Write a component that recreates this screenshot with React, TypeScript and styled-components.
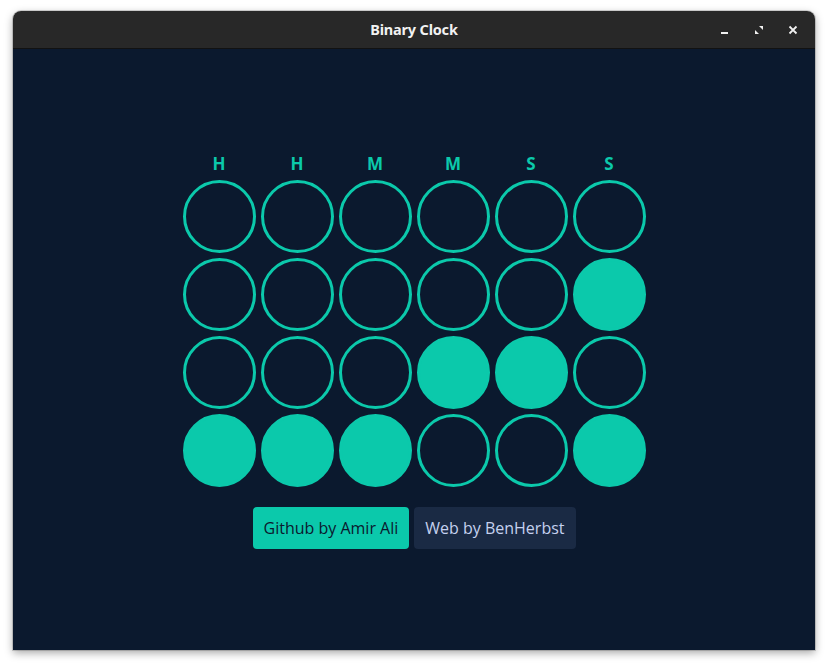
import React from "react";
import styled, { createGlobalStyle } from "styled-components";

const Global = createGlobalStyle`
  html, body { margin: 0; padding: 0; background: #ffffff; }
  body { font-family: "Open Sans", "Noto Sans", sans-serif; }
`;

const Page = styled.div`
  width: 828px;
  height: 666px;
  padding: 11px 13px 0 13px;
  box-sizing: border-box;
`;

const Window = styled.div`
  width: 802px;
  height: 639px;
  display: flex;
  flex-direction: column;
  border-radius: 8px 8px 0 0;
  overflow: hidden;
  box-shadow: 0 3px 8px rgba(0, 0, 0, 0.35), 0 0 0 1px rgba(0, 0, 0, 0.15);
`;

const TitleBar = styled.div`
  height: 37px;
  flex: none;
  background: #282828;
  border-bottom: 1px solid #121212;
  display: grid;
  grid-template-columns: 1fr auto 1fr;
  align-items: center;
`;

const Title = styled.div`
  grid-column: 2;
  color: #f2f2f2;
  font-family: "Noto Sans", sans-serif;
  font-weight: 700;
  font-size: 14.5px;
  letter-spacing: -0.2px;
  margin-top: -2px;
`;

const Controls = styled.div`
  grid-column: 3;
  justify-self: end;
  display: flex;
  align-items: center;
  gap: 18px;
  padding-right: 14px;
`;

const CtrlBtn = styled.div`
  width: 16px;
  height: 16px;
  display: flex;
  align-items: center;
  justify-content: center;
`;

const Content = styled.div`
  flex: 1;
  background: #0b192e;
  display: flex;
  flex-direction: column;
  align-items: center;
  justify-content: center;
  padding-top: 4px;
`;

const Grid = styled.div`
  display: grid;
  grid-template-columns: repeat(6, 73px);
  column-gap: 5px;
  row-gap: 5px;
`;

const Label = styled.div`
  text-align: center;
  color: #0bc9ab;
  font-family: "Open Sans", sans-serif;
  font-weight: 700;
  font-size: 17px;
  line-height: 20px;
  margin-bottom: 1px;
`;

const Bit = styled.div<{ $on: boolean }>`
  width: 73px;
  height: 73px;
  box-sizing: border-box;
  border-radius: 50%;
  border: 3px solid #0bc9ab;
  background: ${(p) => (p.$on ? "#0bc9ab" : "transparent")};
`;

const Buttons = styled.div`
  display: flex;
  gap: 5px;
  margin-top: 20px;
`;

const LinkButton = styled.a<{ $primary?: boolean }>`
  height: 42px;
  padding: 0 11px;
  display: flex;
  align-items: center;
  border-radius: 4px;
  font-family: "Open Sans", sans-serif;
  font-size: 16px;
  text-decoration: none;
  background: ${(p) => (p.$primary ? "#0bc9ab" : "#1a2a44")};
  color: ${(p) => (p.$primary ? "#0b192e" : "#c5d1ef")};
`;

const labels = ["H", "H", "M", "M", "S", "S"];
const rows = [
  [0, 0, 0, 0, 0, 0],
  [0, 0, 0, 0, 0, 1],
  [0, 0, 0, 1, 1, 0],
  [1, 1, 1, 0, 0, 1],
];

export default function App() {
  return (
    <Page>
      <Global />
      <Window>
        <TitleBar>
          <Title>Binary Clock</Title>
          <Controls>
            <CtrlBtn>
              <svg width="10" height="10" viewBox="0 0 10 10">
                <rect x="1" y="7" width="7" height="2" fill="#f0f0f0" />
              </svg>
            </CtrlBtn>
            <CtrlBtn>
              <svg width="10" height="10" viewBox="0 0 10 10">
                <path d="M5 1h4v4L5 1z" fill="#f0f0f0" />
                <path d="M1 5v4h4L1 5z" fill="#f0f0f0" />
              </svg>
            </CtrlBtn>
            <CtrlBtn>
              <svg width="10" height="10" viewBox="0 0 10 10">
                <path d="M1.5 1.5l7 7M8.5 1.5l-7 7" stroke="#f0f0f0" strokeWidth="1.8" />
              </svg>
            </CtrlBtn>
          </Controls>
        </TitleBar>
        <Content>
          <Grid>
            {labels.map((l, i) => (
              <Label key={"l" + i}>{l}</Label>
            ))}
            {rows.map((r, ri) =>
              r.map((v, ci) => <Bit key={ri + "-" + ci} $on={v === 1} />)
            )}
          </Grid>
          <Buttons>
            <LinkButton $primary href="#">Github by Amir Ali</LinkButton>
            <LinkButton href="#">Web by BenHerbst</LinkButton>
          </Buttons>
        </Content>
      </Window>
    </Page>
  );
}
